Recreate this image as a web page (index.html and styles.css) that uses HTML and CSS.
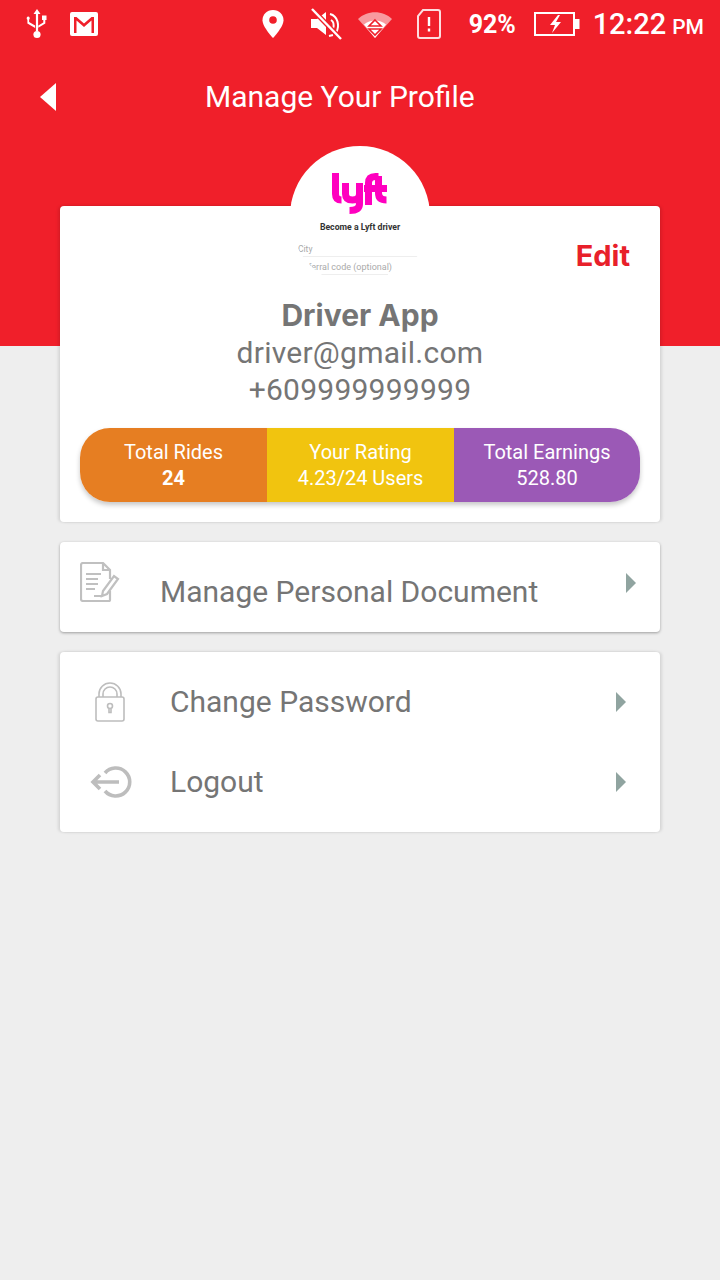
FILE: index.html
```html
<!DOCTYPE html>
<html lang="en">
<head>
    <meta charset="UTF-8">
    <title>Manage Your Profile</title>
    <link rel="stylesheet" href="styles.css">
</head>
<body>
    <div class="hero">
        <div class="status">
            <div class="status-left">
                <svg class="ic-usb" viewBox="0 0 22 30" fill="#fff">
                    <path d="M11 0l3.500 5h-2.400v17.200h-2.200V5H7.500z"/>
                    <circle cx="11" cy="25.500" r="3.600"/>
                    <path d="M2 7.500a1.800 1.800 0 0 1 1.100 3.200V13l6 3.500v2.400L1.400 14.500v-3.800A1.800 1.800 0 0 1 2 7.500z"/>
                    <path d="M16 6.500h4.500V11h-1.200v3.500l-7 4.300v-2.400l5-3V11H16z"/>
                </svg>
                <svg class="ic-gmail" viewBox="0 0 28 24">
                    <rect width="28" height="24" rx="2" fill="#fff"/>
                    <path d="M4 21V5h2.500L14 11.500 21.500 5H24v16h-2.500V8.500L14 15 6.500 8.500V21z" fill="#f01f2a"/>
                </svg>
            </div>
            <div class="status-right">
                <svg class="ic-pin" viewBox="0 0 22 28">
                    <path d="M11 0C4.800 0 .5 4.400.5 10.200.5 17 11 28 11 28s10.500-11 10.500-17.800C21.500 4.400 17.200 0 11 0z" fill="#fff"/>
                    <circle cx="11" cy="10" r="3.800" fill="#f01f2a"/>
                </svg>
                <svg class="ic-mute" viewBox="0 0 32 32">
                    <path d="M1 11h6l9-7v23l-9-7H1z" fill="#fff"/>
                    <path d="M20 6c8 2 10 12 6 19M21 12c3 2 3 6 2 9M19 28l4-1" fill="none" stroke="#fff" stroke-width="2"/>
                    <path d="M2 1l29 30" stroke="#f01f2a" stroke-width="5"/>
                    <path d="M2 1l29 30" stroke="#fff" stroke-width="2.400"/>
                </svg>
                <svg class="ic-wifi" viewBox="0 0 34 28">
                    <path d="M0 9C9 0 25 0 34 9L17 28z" fill="#fff" fill-opacity=".55"/>
                    <path d="M6 14.500C12 9 22 9 28 14.500L17 28z" fill="#fff"/>
                    <path d="M17 10l6 6H11zM11 19h12l-6 6z" fill="#fff" stroke="#f01f2a" stroke-width="1.600"/>
                </svg>
                <svg class="ic-sim" viewBox="0 0 24 30">
                    <path d="M6 1h15a2 2 0 0 1 2 2v24a2 2 0 0 1-2 2H3a2 2 0 0 1-2-2V7z" fill="none" stroke="#fff" stroke-opacity=".85" stroke-width="2"/>
                    <path d="M12 8v9M12 19.500v3" stroke="#fff" stroke-width="2.400"/>
                </svg>
                <span class="st-pct">92%</span>
                <svg class="ic-batt" viewBox="0 0 46 24">
                    <rect x="1" y="1" width="39" height="22" fill="none" stroke="#fff" stroke-width="2"/>
                    <rect x="41" y="7" width="4.500" height="10" fill="#fff"/>
                    <path d="M24 3l-8 10h5l-3 8 9-11h-5l4-7z" fill="#fff"/>
                </svg>
                <span class="st-time">12:22</span>
                <span class="st-ampm">PM</span>
            </div>
        </div>
        <div class="toolbar">
            <span class="back"></span>
            <h1 class="title">Manage Your Profile</h1>
        </div>
    </div>

    <div class="content">
        <div class="avatar">
            <svg class="lyft" viewBox="0 0 58 42" fill="none" stroke="#ff00bf" stroke-width="7">
                <path d="M4.500 1v21q0 6 6 6"/>
                <path d="M14.500 11v11q0 6 7 6t7-6V11v21q0 6.500-10 6.500"/>
                <path d="M37.500 33V11q0-6.500 7-6.500h3M33 16.500h17"/>
                <path d="M47.500 4v17q0 7 8 7M44 16.500h12"/>
            </svg>
            <div class="av-title">Become a Lyft driver</div>
            <div class="av-field">City</div>
            <div class="av-field av-ref">Referral code (optional)</div>
        </div>

        <div class="card card-main">
            <div class="edit-row"><span class="edit">Edit</span></div>
            <div class="name">Driver App</div>
            <div class="sub">driver@gmail.com</div>
            <div class="sub">+609999999999</div>
            <div class="stats">
                <div class="stat orange"><span>Total Rides</span><b>24</b></div>
                <div class="stat yellow"><span>Your Rating</span><span>4.23/24 Users</span></div>
                <div class="stat purple"><span>Total Earnings</span><span>528.80</span></div>
            </div>
        </div>

        <div class="card card-doc">
            <svg class="ic-doc" viewBox="0 0 40 40" fill="none" stroke="#c0c0c0" stroke-width="2.200">
                <path d="M3 1h20l7 7v9M23 1v7h7M30 29v9a1 1 0 0 1-1 1H3a2 2 0 0 1-2-2V3a2 2 0 0 1 2-2"/>
                <path d="M6 12h15M6 17h12M6 22h12M6 27h9M14 34h8"/>
                <path d="M23 29l11-15 4 3-11 15-5 2z"/>
            </svg>
            <span class="row-text">Manage Personal Document</span>
            <span class="arrow"></span>
        </div>

        <div class="card card-list">
            <div class="row">
                <div class="row-icon">
                    <svg class="ic-lock" viewBox="0 0 30 40" fill="none" stroke="#bdbdbd" stroke-width="1.600">
                        <rect x="1" y="15" width="28" height="24" rx="2"/>
                        <path d="M4 15V12a11 11 0 0 1 22 0v3M8 15V12a7 7 0 0 1 14 0v3"/>
                        <circle cx="15" cy="24" r="2.500"/>
                        <path d="M14 26.500v4h2v-4"/>
                    </svg>
                </div>
                <span class="row-text">Change Password</span>
                <span class="arrow"></span>
            </div>
            <div class="row">
                <div class="row-icon">
                    <svg class="ic-logout" viewBox="0 0 42 32" fill="none" stroke="#bdbdbd" stroke-width="3.600">
                        <path d="M15 7a14 14 0 1 1 0 18"/>
                        <path d="M3 16h26M10 9l-7 7 7 7"/>
                    </svg>
                </div>
                <span class="row-text">Logout</span>
                <span class="arrow"></span>
            </div>
        </div>
    </div>
</body>
</html>
```

FILE: styles.css
```css
*{
    margin: 0;
    padding: 0;
    box-sizing: border-box;
}

body{
    background: #eeeeee;
    font-family: "Roboto", "Noto Sans", sans-serif;
    color: #757575;
    height: 1280px;
    overflow: hidden;
}

.hero{
    height: 346px;
    background: #f01f2a;
    color: #fff;
}

.status{
    height: 48px;
    display: flex;
    justify-content: space-between;
    align-items: center;
    padding: 0 16px 0 26px;
}

.status-left,.status-right{
    display: flex;
    align-items: center;
}

.ic-usb{
    width: 22px;
    height: 30px;
}

.ic-gmail{
    width: 28px;
    height: 24px;
    margin-left: 22px;
}

.ic-pin{
    width: 22px;
    height: 28px;
}

.ic-mute{
    width: 32px;
    height: 32px;
    margin-left: 26px;
}

.ic-wifi{
    width: 34px;
    height: 28px;
    margin-left: 16px;
}

.ic-sim{
    width: 24px;
    height: 30px;
    margin-left: 25px;
}

.st-pct{
    font-size: 25px;
    font-weight: 700;
    margin-left: 28px;
    width: 46px;
    white-space: nowrap;
}

.ic-batt{
    width: 46px;
    height: 24px;
    margin-left: 19px;
}

.st-time{
    font-size: 29px;
    font-weight: 500;
    margin-left: 13px;
}

.st-ampm{
    font-size: 21px;
    font-weight: 500;
    margin-left: 6px;
    padding-top: 6px;
}

.toolbar{
    height: 98px;
    display: flex;
    align-items: center;
    padding-left: 40px;
}

.back{
    width: 0;
    height: 0;
    border-top: 14px solid transparent;
    border-bottom: 14px solid transparent;
    border-right: 16px solid #fff;
}

.title{
    font-size: 30px;
    font-weight: 400;
    margin-left: 149px;
    margin-top: -2px;
}

.content{
    position: relative;
    margin-top: -140px;
    padding: 0 60px;
}

.avatar{
    position: absolute;
    left: 290px;
    top: -60px;
    width: 140px;
    height: 140px;
    border-radius: 50%;
    background: #fff;
    overflow: hidden;
    text-align: center;
    padding-top: 26px;
    z-index: 2;
}

.lyft{
    display: block;
    width: 58px;
    height: 42px;
    margin: 0 auto;
}

.av-title{
    font-size: 8.700px;
    font-weight: 700;
    color: #333;
    margin-top: 8px;
}

.av-field{
    font-size: 8.500px;
    color: #aaa;
    text-align: left;
    margin: 12px 12px 0 8px;
    padding-bottom: 2px;
    border-bottom: 1px solid #eee;
}

.av-ref{
    margin: 5px 42px 0 8px;
    font-size: 9px;
    text-align: right;
    white-space: nowrap;
}

.card{
    background: #fff;
    border-radius: 4px;
    box-shadow: -2px 0 3px rgba(0, 0, 0, .1), 2px 0 3px rgba(0, 0, 0, .1);
    margin-bottom: 20px;
}

.card-main{
    height: 316px;
    padding: 32px 20px 0;
    text-align: center;
}

.edit-row{
    display: flex;
    justify-content: flex-end;
    padding-right: 10px;
    height: 34px;
}

.edit{
    font-family: "Inter", "Roboto", sans-serif;
    font-size: 29px;
    font-weight: 700;
    color: #e8202a;
}

.name{
    font-family: "Inter", "Roboto", sans-serif;
    font-size: 30px;
    font-weight: 700;
    line-height: 38px;
    margin-top: 24px;
}

.sub{
    font-size: 30px;
    line-height: 37px;
    letter-spacing: .25px;
}

.stats{
    display: grid;
    grid-template-columns: 187px 187px 186px;
    height: 74px;
    margin-top: 20px;
    border-radius: 30px;
    overflow: hidden;
    box-shadow: 0 3px 5px rgba(0, 0, 0, .22);
}

.stat{
    display: flex;
    flex-direction: column;
    justify-content: center;
    color: #fff;
    font-size: 20px;
    line-height: 26px;
}

.orange{
    background: #e67e22;
}

.yellow{
    background: #f1c40f;
}

.purple{
    background: #9b59b6;
}

.card-doc{
    height: 90px;
    display: flex;
    padding-left: 20px;
    padding-right: 24px;
    box-shadow: 0 1px 3px rgba(0, 0, 0, .35);
}

.ic-doc{
    width: 40px;
    height: 40px;
    margin-top: 20px;
}

.card-doc .row-text{
    margin-left: 40px;
    margin-top: 30px;
    flex: 1;
}

.card-doc .arrow{
    margin-top: 31px;
}

.row-text{
    font-size: 30px;
    line-height: 40px;
}

.arrow{
    width: 0;
    height: 0;
    border-top: 10px solid transparent;
    border-bottom: 10px solid transparent;
    border-left: 10px solid #90a4a0;
}

.card-list{
    height: 180px;
    padding: 10px 34px 10px 30px;
}

.row{
    height: 80px;
    display: flex;
    align-items: center;
}

.row .row-text{
    flex: 1;
}

.row-icon{
    width: 80px;
    display: flex;
}

.ic-lock{
    width: 30px;
    height: 40px;
    margin-left: 5px;
}

.ic-logout{
    width: 42px;
    height: 32px;
}
```
